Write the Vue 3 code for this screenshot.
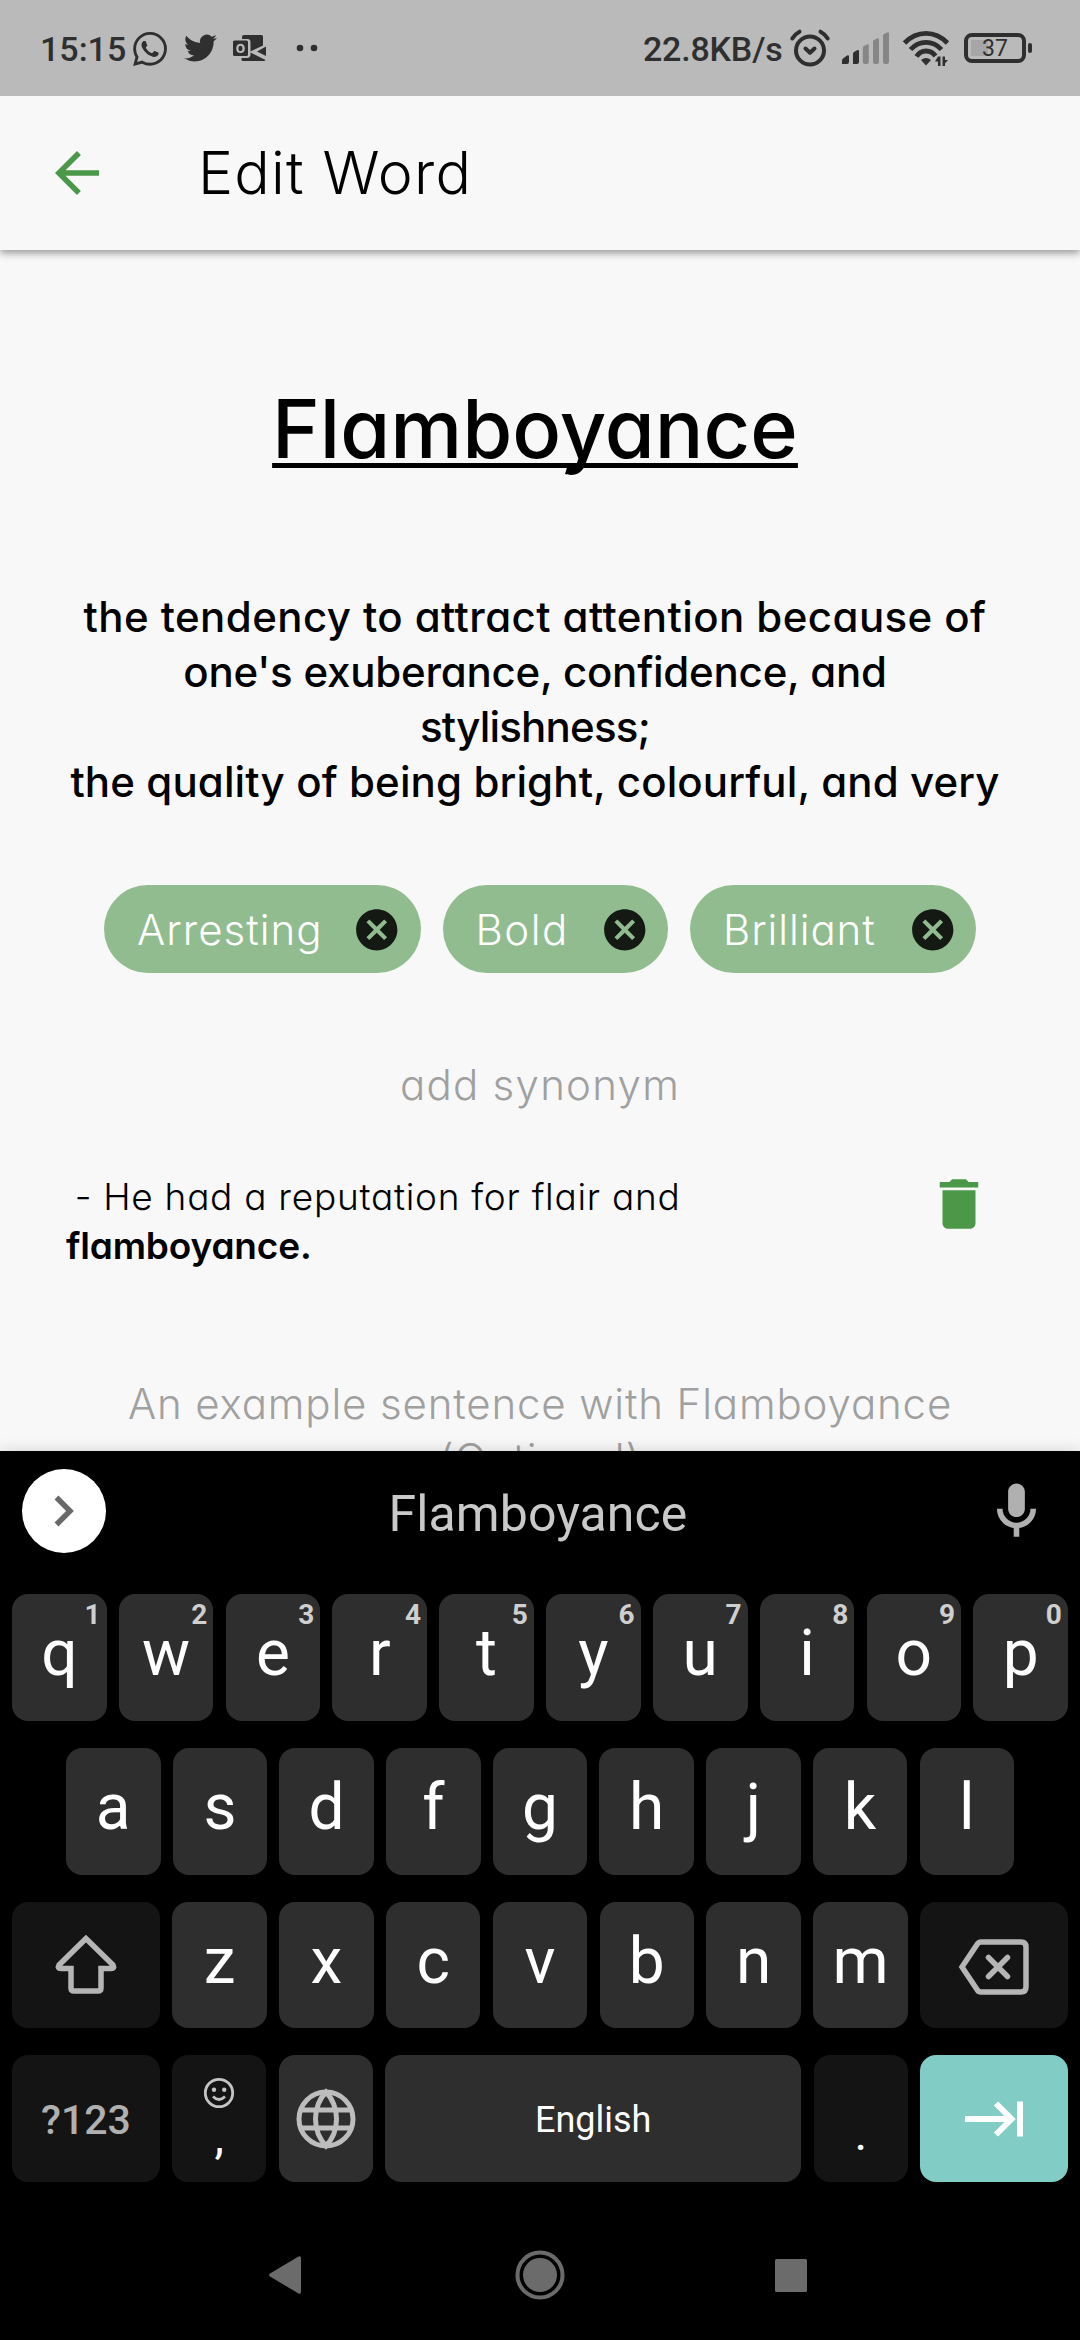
<script setup>
const definition = [
  { text: 'the tendency to attract attention because of', spacing: 0.42 },
  { text: "one's exuberance, confidence, and", spacing: -0.22 },
  { text: 'stylishness;', spacing: -0.8 },
  { text: 'the quality of being bright, colourful, and very', spacing: 0.12 },
]
const chips = [
  { label: 'Arresting', width: 316.5, spacing: 1 },
  { label: 'Bold', width: 225.5, spacing: 1.5 },
  { label: 'Brilliant', width: 286, spacing: 0.9 },
]
const topRow = [...'qwertyuiop'].map((letter, i) => ({ letter, digit: (i + 1) % 10 }))
const middleRow = [...'asdfghjkl']
const bottomRow = [...'zxcvbnm']
</script>

<template>
  <div class="screen">
    <header class="status">
      <span class="clock">15:15</span>
      <svg class="whatsapp" viewBox="0 0 24 24"><path d="M17.472 14.382c-.297-.149-1.758-.867-2.03-.967-.273-.099-.471-.148-.67.15-.197.297-.767.966-.94 1.164-.173.199-.347.223-.644.075-.297-.15-1.255-.463-2.39-1.475-.883-.788-1.48-1.761-1.653-2.059-.173-.297-.018-.458.13-.606.134-.133.298-.347.446-.52.149-.174.198-.298.298-.497.099-.198.05-.371-.025-.52-.075-.149-.669-1.612-.916-2.207-.242-.579-.487-.5-.669-.51-.173-.008-.371-.01-.57-.01-.198 0-.52.074-.792.372-.272.297-1.04 1.016-1.04 2.479 0 1.462 1.065 2.875 1.213 3.074.149.198 2.096 3.2 5.077 4.487.709.306 1.262.489 1.694.625.712.227 1.36.195 1.871.118.571-.085 1.758-.719 2.006-1.413.248-.694.248-1.289.173-1.413-.074-.124-.272-.198-.57-.347m-5.421 7.403h-.004a9.87 9.87 0 01-5.031-1.378l-.361-.214-3.741.982.998-3.648-.235-.374a9.86 9.86 0 01-1.51-5.26c.001-5.45 4.436-9.884 9.888-9.884 2.64 0 5.122 1.03 6.988 2.898a9.825 9.825 0 012.893 6.994c-.003 5.45-4.437 9.884-9.885 9.884m8.413-18.297A11.815 11.815 0 0012.05 0C5.495 0 .16 5.335.157 11.892c0 2.096.547 4.142 1.588 5.945L.057 24l6.305-1.654a11.882 11.882 0 005.683 1.448h.005c6.554 0 11.89-5.335 11.893-11.893a11.821 11.821 0 00-3.48-8.413z" /></svg>
      <svg class="twitter" viewBox="0 2 24 20"><path d="M23.953 4.57a10 10 0 01-2.825.775 4.958 4.958 0 002.163-2.723c-.951.555-2.005.959-3.127 1.184a4.92 4.92 0 00-8.384 4.482C7.69 8.095 4.067 6.13 1.64 3.162a4.822 4.822 0 00-.666 2.475c0 1.71.87 3.213 2.188 4.096a4.904 4.904 0 01-2.228-.616v.06a4.923 4.923 0 003.946 4.827 4.996 4.996 0 01-2.212.085 4.936 4.936 0 004.604 3.417 9.867 9.867 0 01-6.102 2.105c-.39 0-.779-.023-1.17-.067a13.995 13.995 0 007.557 2.209c9.053 0 13.998-7.496 13.998-13.985 0-.21 0-.42-.015-.63A9.935 9.935 0 0024 4.59z" /></svg>
      <svg class="outlook" viewBox="0 0 34 26">
        <path d="M11 0h17.500q1.500 0 1.500 1.500v9L17.500 16.500V7q0-3-3-3H9V2q0-2 2-2z" />
        <path d="M33 11.500v9.500l-9-4.500z" />
        <path d="M17.500 17.500l15 7.500q-.5 1-1.500 1H10q-1.500 0-1.500-1.500V23H14q3 0 3.500-3z" />
        <path fill-rule="evenodd" d="M1.500 5.500h12q1.500 0 1.500 1.500v12.500q0 1.500-1.500 1.500h-12Q0 21 0 19.500V7q0-1.500 1.500-1.500zM7.500 8.700c-2.600 0-4.300 1.900-4.300 4.700s1.700 4.700 4.300 4.700 4.300-1.900 4.300-4.700-1.700-4.700-4.300-4.700zm0 2c1.300 0 2 1 2 2.700s-.7 2.700-2 2.700-2-1-2-2.700.7-2.700 2-2.700z" />
      </svg>
      <svg class="dots" viewBox="0 0 22 8"><circle cx="4" cy="4" r="3.300" /><circle cx="18" cy="4" r="3.300" /></svg>
      <span class="speed">22.8KB/s</span>
      <svg class="alarm" viewBox="0 0 40 38">
        <g fill="none" stroke="#2f2f2f" stroke-width="4" stroke-linecap="round" stroke-linejoin="round">
          <circle cx="20" cy="21.500" r="14" />
          <path d="M2.300 9.500Q5 5 9.500 2.700M37.700 9.500Q35 5 30.500 2.700M15.500 19.500l4.500 4.300 4.500-4.300" />
        </g>
      </svg>
      <svg class="signal" viewBox="0 0 48 32">
        <path d="M0 32v-3.500q0-1 1-2l4-3q2-1 2 1V30q0 2-2 2zM11 32V22q0-1.500 1-2l3-1.800q2-.7 2 1V30q0 2-2 2z" />
        <path fill="#868686" d="M20.800 30V16q0-1.500 1-2l3-1.600q2-.7 2 1V30q0 2-2 2h-2q-2 0-2-2zM31 30V10q0-1.500 1-2l3-1.600q2-.7 2 1V30q0 2-2 2h-2q-2 0-2-2zM41 30V4q0-1.500 1-2l3-1.600q2-.7 2 1V30q0 2-2 2h-2q-2 0-2-2z" />
      </svg>
      <svg class="wifi" viewBox="0 0 47 37">
        <g fill="none" stroke="#2f2f2f" stroke-width="4.800">
          <path d="M1.500 13Q11 3.400 23 3.400T44.500 13" />
          <path d="M7.500 19.500Q14 12.300 23 12.300T38.500 19.500" />
          <path d="M13.500 26.500Q17 21 23 21T32.500 26" />
        </g>
        <path d="M18 30q5-4 10 0l-5 5.500zM35 26.500h2.500V36H35v-4.500h-3zM39.500 26.500H42v3.500h3l-3 3.500V36h-2.500z" />
      </svg>
      <span class="battery">37</span>
      <span class="battery-tip"></span>
    </header>

    <nav class="appbar">
      <svg class="back" viewBox="0 0 24 24"><path d="M20 11H7.830l5.590-5.590L12 4l-8 8 8 8 1.410-1.410L7.830 13H20v-2z" /></svg>
      <h1>Edit Word</h1>
    </nav>

    <main class="content">
      <h2>Flamboyance</h2>
      <div class="definition">
        <span v-for="line in definition" :key="line.text" :style="{ letterSpacing: line.spacing + 'px' }">{{ line.text }}</span>
      </div>
      <div class="chips">
        <div v-for="c in chips" :key="c.label" class="chip" :style="{ width: c.width + 'px', letterSpacing: c.spacing + 'px' }">
          <span>{{ c.label }}</span>
          <svg viewBox="0 0 24 24"><path d="M12 2C6.470 2 2 6.470 2 12s4.470 10 10 10 10-4.470 10-10S17.530 2 12 2zm5 13.590L15.590 17 12 13.410 8.410 17 7 15.590 10.590 12 7 8.410 8.410 7 12 10.590 15.590 7 17 8.410 13.410 12 17 15.590z" /></svg>
        </div>
      </div>
      <div class="hint add-synonym">add synonym</div>
      <div class="example">
        <p><span>&nbsp;- He had a reputation for flair and</span><br /><b>flamboyance.</b></p>
        <svg viewBox="0 0 24 24"><path d="M6 19c0 1.100.900 2 2 2h8c1.100 0 2-.900 2-2V7H6v12zM19 4h-3.500l-1-1h-5l-1 1H5v2h14V4z" /></svg>
      </div>
      <div class="hint new-example">An example sentence with Flamboyance<br />(Optional)</div>
    </main>

    <section class="keyboard">
      <div class="suggestions">
        <span class="expand"><svg viewBox="0 0 20 32"><path d="M2.500 2.500L16 16 2.500 29.500" /></svg></span>
        <span class="suggestion">Flamboyance</span>
        <svg class="mic" viewBox="0 0 24 24"><path d="M12 14c1.660 0 2.990-1.340 2.990-3L15 5c0-1.660-1.340-3-3-3S9 3.340 9 5v6c0 1.660 1.340 3 3 3zm5-3c0 2.760-2.240 5-5 5s-5-2.240-5-5H5c0 3.530 2.610 6.430 6 6.920V21h2v-3.080c3.390-.490 6-3.390 6-6.920h-2z" /></svg>
      </div>
      <div class="keys">
        <div class="row">
          <span v-for="k in topRow" :key="k.letter" class="key">{{ k.letter }}<sup>{{ k.digit }}</sup></span>
        </div>
        <div class="row inset">
          <span v-for="k in middleRow" :key="k" class="key">{{ k }}</span>
        </div>
        <div class="row">
          <span class="key dark wide">
            <svg class="shift" viewBox="0 0 62 60"><path d="M31 4.500L4 31Q2 34.500 6 34.500H16V54q0 3 3 3H43q3 0 3-3V34.500H56Q60 34.500 58 31z" /></svg>
          </span>
          <span v-for="k in bottomRow" :key="k" class="key">{{ k }}</span>
          <span class="key dark wide">
            <svg class="erase" viewBox="0 0 70 56"><path d="M22 3H62q5 0 5 5V48q0 5-5 5H22q-2.500 0-4-2.500L3 28 18 5.500Q19.500 3 22 3z" /><path d="M29.500 18.500l19 19m0-19l-19 19" stroke-linecap="round" /></svg>
          </span>
        </div>
        <div class="row">
          <span class="key dark wide symbols">?123</span>
          <span class="key dark comma">
            <svg viewBox="0 0 32 32"><circle class="face" cx="16" cy="16" r="13.700" /><circle cx="11" cy="12.800" r="2.200" /><circle cx="21.200" cy="12.800" r="2.200" /><path d="M10 19.500q6 6 12 0" /></svg>
            <span>,</span>
          </span>
          <span class="key">
            <svg class="globe" viewBox="0 0 60 60"><circle cx="30" cy="30" r="27" /><path d="M5 21H55M5 39H55M30 3C16 18 16 42 30 57C44 42 44 18 30 3z" /></svg>
          </span>
          <span class="key space">English</span>
          <span class="key dark period">.</span>
          <span class="key wide enter">
            <svg viewBox="0 0 58 36"><path d="M0 18H46M31 2.500L46.500 18 31 33.500M55 .5V35.500" /></svg>
          </span>
        </div>
      </div>
      <div class="navbar">
        <svg viewBox="0 0 32 38"><path d="M29.500.5Q32-.5 32 2V36q0 2.500-2.500 1.500L1 20.500Q-1 19 1 17.500z" /></svg>
        <svg viewBox="0 0 50 50"><circle cx="25" cy="25" r="22.500" fill="none" stroke="#6b6b6b" stroke-width="4" /><circle cx="25" cy="25" r="17" /></svg>
        <svg viewBox="0 0 32 33"><rect width="32" height="33" rx="1.500" /></svg>
      </div>
    </section>
  </div>
</template>

<style>
body { margin: 0; background: #000; }
</style>

<style scoped>
.screen { width: 1080px; height: 2340px; display: flex; flex-direction: column; overflow: hidden; background: #f8f8f8; font-family: Roboto, sans-serif; }
svg { display: block; flex: none; overflow: visible; }

.status { flex: none; position: relative; z-index: 2; height: 96px; display: flex; align-items: flex-start; background: #bababa; color: #2f2f2f; fill: #2f2f2f; font-size: 34px; font-weight: 500; line-height: 40px; }
.clock { margin: 29px 0 0 40px; width: 93px; }
.whatsapp { width: 34px; height: 34px; margin-top: 31.500px; }
.twitter { width: 33px; height: 28px; margin: 34px 0 0 17px; }
.outlook { width: 34px; height: 26px; margin: 34.500px 0 0 16px; }
.dots { width: 22px; height: 8px; margin: 44px 0 0 29px; }
.speed { margin: 29px 7.500px 0 auto; letter-spacing: -.2px; }
.alarm { width: 40px; height: 38px; margin-top: 29px; }
.signal { width: 48px; height: 32px; margin: 32px 0 0 12px; }
.wifi { width: 47px; height: 37px; margin: 30px 0 0 13px; }
.battery { box-sizing: border-box; width: 62px; height: 30px; margin: 33px 2px 0 14px; border: 4px solid #2f2f2f; border-radius: 8px; background: linear-gradient(#a6a6a6, #a6a6a6) 3px 3px / 17px 16px no-repeat; text-align: center; font-size: 23px; font-weight: 400; line-height: 24px; }
.battery-tip { width: 4px; height: 10px; margin: 43px 48px 0 0; border-radius: 2px; background: #2f2f2f; }

.appbar { flex: none; position: relative; z-index: 1; height: 154px; display: flex; align-items: center; background: #f8f8f8; box-shadow: 0 3px 8px rgba(0, 0, 0, .4); }
.back { width: 66px; height: 66px; margin-left: 44px; fill: #4b9848; }
h1, h2, .content { font-family: Inter, sans-serif; font-feature-settings: "cv11"; font-weight: 300; color: #000; }
h1 { margin: 0 0 0 88px; font-size: 59px; line-height: 70px; letter-spacing: 1.200px; }

.content { flex: none; height: 1201px; overflow: hidden; }
h2 { margin: 127px 10px 0 0; text-align: center; font-size: 81px; font-weight: 500; line-height: 105px; text-decoration: underline; text-decoration-thickness: 4.500px; text-underline-offset: 5px; text-decoration-skip-ink: none; }
.definition { margin: 107px 10px 0 0; display: flex; flex-direction: column; align-items: center; font-size: 42px; font-weight: 500; line-height: 55px; }
.definition span { white-space: nowrap; }
.chips { margin-top: 76px; display: flex; justify-content: center; gap: 22px; }
.chip { box-sizing: border-box; height: 88px; padding: 0 19px 0 33px; display: flex; align-items: center; justify-content: space-between; border-radius: 44px; background: #91bc8f; color: #fff; font-size: 42px; }
.chip svg { width: 49.500px; height: 49.500px; margin-top: 1px; fill: #151914; }
.hint { text-align: center; font-size: 42px; line-height: 55px; color: #a0a0a0; }
.add-synonym { margin-top: 84px; letter-spacing: 1.250px; }
.example { margin-top: 60px; display: flex; align-items: flex-start; justify-content: space-between; padding: 0 88px 0 66px; font-size: 37px; line-height: 49px; }
.example p { margin: 0; }
.example span { margin-left: -2.500px; letter-spacing: .720px; }
.example b { font-weight: 600; letter-spacing: -.150px; }
.example svg { width: 66px; height: 66px; margin-top: -1px; fill: #4b9848; }
.new-example { margin-top: 106px; letter-spacing: .850px; }

.keyboard { position: relative; flex: 1; display: flex; flex-direction: column; background: #000; box-shadow: 0 -1px 14px rgba(0, 0, 0, .14); }
.suggestions { height: 143px; box-sizing: border-box; padding: 18px 11px 0 22px; display: flex; align-items: flex-start; color: #c9c9c9; font-size: 50px; line-height: 84px; }
.suggestion { flex: 1; padding: 3px 13px 0 0; text-align: center; letter-spacing: .1px; }
.expand { width: 84px; height: 84px; display: flex; align-items: center; justify-content: center; border-radius: 50%; background: #fff; }
.expand svg { width: 20px; height: 32px; fill: none; stroke: #696969; stroke-width: 5.500; }
.mic { width: 67px; height: 67px; margin: 9px 19px 0 0; fill: #b0b0b0; }
.keys { display: flex; flex-direction: column; gap: 27px; padding: 0 12px; }
.row { display: flex; gap: 12.200px; height: 126.800px; }
.row.inset { padding: 0 54px; }
.key { position: relative; flex: 1 1 0; min-width: 0; box-sizing: border-box; display: flex; align-items: center; justify-content: center; padding-bottom: 6.500px; border-radius: 16px; background: #2e2e2e; color: #fff; font-size: 64px; line-height: 76px; }
.key sup { position: absolute; top: 5px; right: 6px; font-size: 28px; font-weight: 700; line-height: 32px; color: #cfcfcf; }
.dark { background: #141414; }
.wide { flex: 0 0 148px; }
.shift { width: 62px; height: 60px; margin-top: 4px; }
.erase { width: 70px; height: 56px; margin-top: 11px; }
.shift, .erase { fill: none; stroke: #b5b5b5; stroke-width: 5.500; }
.symbols { padding: 0; color: #b0b0b0; font-size: 41px; font-weight: 500; line-height: 48px; }
.symbols, .space { padding: 2px 0 0; }
.comma { flex-direction: column; justify-content: flex-start; padding: 22px 0 0; font-size: 48px; line-height: 56px; }
.comma svg { width: 32px; height: 32px; fill: #c4c4c4; }
.comma svg .face, .comma svg path { fill: none; stroke: #c4c4c4; stroke-width: 2.800; }
.globe { width: 60px; height: 60px; fill: none; stroke: #bdbdbd; stroke-width: 5; margin-top: 7px; }
.space { flex: 0 0 416.500px; font-size: 36px; }
.period { padding: 31px 0 0; font-size: 48px; }
.enter { padding: 0; background: #81ccc5; }
.enter svg { width: 58px; height: 36px; fill: none; stroke: #fff; stroke-width: 6; }
.navbar { flex: 1; display: flex; align-items: center; padding: 28px 0 0 268.500px; fill: #6b6b6b; }
.navbar svg:nth-child(1) { width: 32px; height: 38px; }
.navbar svg:nth-child(2) { width: 50px; height: 50px; margin-left: 214.500px; }
.navbar svg:nth-child(3) { width: 32px; height: 33px; margin-left: 210px; }
</style>
